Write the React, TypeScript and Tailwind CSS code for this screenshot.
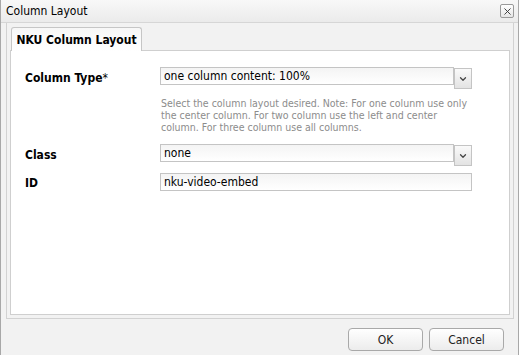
import { ChevronDown, X } from 'lucide-react';

const font = 'font-["DejaVu_Sans_Condensed","DejaVu_Sans",sans-serif] [font-stretch:condensed]';

function SelectBox({ value }: { value: string }) {
    return (
        <div className="flex w-[312px] items-start">
            <div className="flex h-[18px] flex-1 items-center border border-[#c4c4c4] bg-gradient-to-b from-[#f4f4f4] to-white px-[3px] text-[12px] text-black">
                {value}
            </div>
            <div className="mt-[1px] flex h-[21px] w-[18px] items-center justify-center border border-[#c4c4c4] bg-gradient-to-b from-[#fafafa] to-[#e3e3e3]">
                <ChevronDown className="h-[10px] w-[10px] text-[#444]" strokeWidth={3} />
            </div>
        </div>
    );
}

export default function App() {
    return (
        <div className={`${font} relative h-[355px] w-[519px] overflow-hidden border-l border-r border-[#a8a8a8] bg-[#f2f2f2] text-black`}>
            {/* Title bar */}
            <div className="flex h-[23px] items-center border-b border-[#d6d6d6] bg-gradient-to-b from-[#f8f8f8] to-[#ebebeb] pl-[5px] text-[12px]">
                Column Layout
            </div>
            <button
                type="button"
                className="absolute right-[4px] top-[4px] flex h-[14px] w-[14px] items-center justify-center rounded-[2px] border border-[#9a9a9a] bg-gradient-to-b from-white to-[#e6e6e6]"
                aria-label="Close"
            >
                <X className="h-[11px] w-[11px] text-[#333]" strokeWidth={2} />
            </button>

            {/* Tab panel */}
            <div className="ml-[5px] mr-[4px] border-x border-b border-[#d2d2d2] px-[3px] pb-[3px] pt-[3px]">
                <div className="flex h-[24px] items-end pl-[1px]">
                    <div className="relative z-10 -mb-[1px] flex h-[24px] w-[131px] items-center justify-center rounded-t-[3px] border border-b-0 border-[#c6c6c6] bg-gradient-to-b from-[#f7f7f7] to-white text-[12px] font-bold">
                        NKU Column Layout
                    </div>
                </div>
                <div className="h-[265px] border border-[#cfcfcf] bg-white pl-[14px] pt-[16px]">
                    <div className="flex items-start">
                        <div className="w-[135px] pt-[2px] text-[12px] font-bold">
                            Column Type<span className="font-normal">*</span>
                        </div>
                        <div>
                            <SelectBox value="one column content: 100%" />
                            <p className="mt-[8px] w-[312px] pl-[1px] text-[10.5px] leading-[12px] text-[#8c8c8c]">
                                Select the column layout desired. Note: For one colunm use only the center column. For two column use the left and center column. For three column use all columns.
                            </p>
                        </div>
                    </div>
                    <div className="mt-[11px] flex items-start">
                        <div className="w-[135px] pt-[2px] text-[12px] font-bold">Class</div>
                        <SelectBox value="none" />
                    </div>
                    <div className="mt-[7px] flex items-start">
                        <div className="w-[135px] pt-[1px] text-[12px] font-bold">ID</div>
                        <div className="flex h-[18px] w-[312px] items-center border border-[#c4c4c4] bg-gradient-to-b from-[#f4f4f4] to-white px-[3px] text-[12px]">
                            nku-video-embed
                        </div>
                    </div>
                </div>
            </div>

            {/* Footer buttons */}
            <div className="flex justify-end gap-[6px] pr-[14px] pt-[9px]">
                {['OK', 'Cancel'].map((label) => (
                    <button
                        key={label}
                        type="button"
                        className="flex h-[23px] w-[75px] items-center justify-center rounded-[4px] border border-[#a9a9a9] bg-gradient-to-b from-white to-[#ececec] text-[12px] text-[#222]"
                    >
                        {label}
                    </button>
                ))}
            </div>
        </div>
    );
}
